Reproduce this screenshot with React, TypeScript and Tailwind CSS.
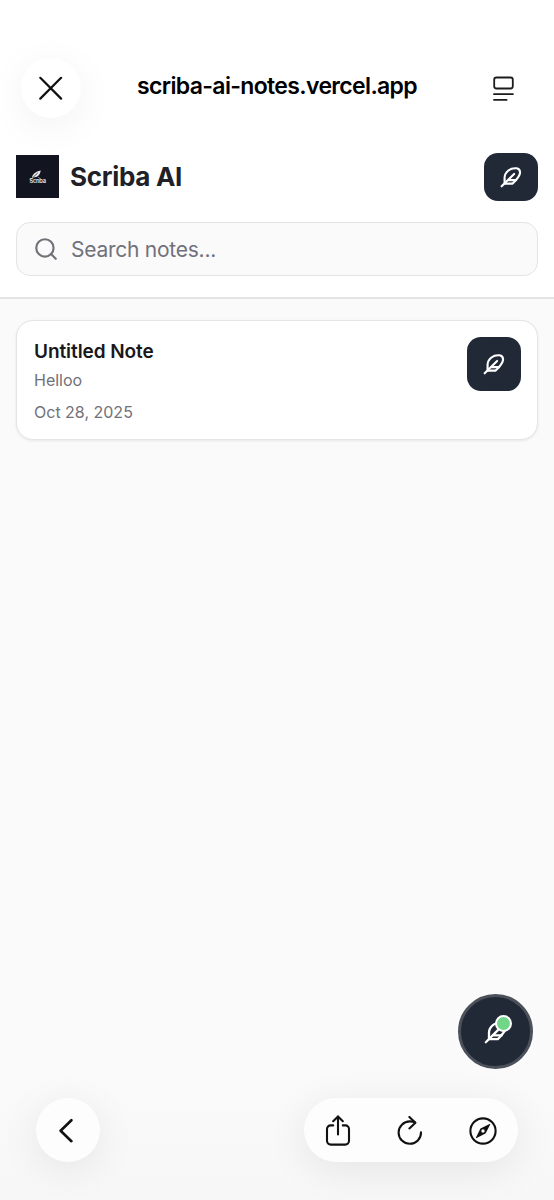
import type { FC, ReactNode } from 'react';
import { Search } from 'lucide-react';

type Note = {
    id: number;
    title: string;
    preview: string;
    date: string;
};

const notes: Note[] = [
    { id: 1, title: 'Untitled Note', preview: 'Helloo', date: 'Oct 28, 2025' },
];

const FeatherIcon: FC<{ size: number }> = ({ size }) => (
    <svg width={size} height={size} viewBox="0 0 24 24" fill="none" stroke="currentColor" strokeWidth="2.3" strokeLinecap="round" strokeLinejoin="round">
        <path d="M5 19.2V12.5C5 10 6.6 7 9.2 4.9 11.8 2.8 14.8 2.2 18 2.5 20.5 2.8 21.8 4.4 21.9 7 22 11 18 15 13.8 19.2Z" />
        <path d="M15.4 8.6 1.8 22.2M17.6 15.4H9" />
    </svg>
);

const CloseIcon: FC = () => (
    <svg width="24" height="24" viewBox="0 0 24 24" fill="none" stroke="#111" strokeWidth="2.2" strokeLinecap="round">
        <path d="M1.3 1.8 22.1 22.6M22.1 1.8 1.3 22.6" />
    </svg>
);

const PageMenuIcon: FC = () => (
    <svg width="22" height="26" viewBox="0 0 22 26" fill="none" stroke="#1c1c1e" strokeWidth="1.8" strokeLinecap="round">
        <rect x="1.2" y="1.5" width="18.6" height="11" rx="2.2" />
        <path d="M1 18.2h18.9M1 23.9h12.6" />
    </svg>
);

const BackIcon: FC = () => (
    <svg width="16" height="26" viewBox="0 0 16 26" fill="none" stroke="#111" strokeWidth="2.6" strokeLinecap="round" strokeLinejoin="round">
        <path d="M13.4 3.2 2.6 13.7 13.4 24.2" />
    </svg>
);

const ShareIcon: FC = () => (
    <svg width="26" height="32" viewBox="0 0 26 32" fill="none" stroke="#111" strokeWidth="2.1" strokeLinecap="round" strokeLinejoin="round">
        <path d="M8.2 10.4H5.6A3.6 3.6 0 0 0 2 14v11.8a3.8 3.8 0 0 0 3.8 3.8h14.4a3.8 3.8 0 0 0 3.8-3.8V14a3.6 3.6 0 0 0-3.6-3.6h-2.6" />
        <path d="M13 19.4V1.4M8.2 6.2 13 1.4l4.8 4.8" />
    </svg>
);

const ReloadIcon: FC = () => (
    <svg width="26" height="30" viewBox="0 0 26 30" fill="none" stroke="#111" strokeWidth="2.1" strokeLinecap="round" strokeLinejoin="round">
        <path d="M24 16.4A11.2 11.2 0 1 1 12.8 5.4Q16 5.4 18 6.4" />
        <path d="M12.4 1 18.4 6.7 12.4 12.4" />
    </svg>
);

const CompassIcon: FC = () => (
    <svg width="28" height="28" viewBox="0 0 28 28" fill="none">
        <circle cx="14" cy="14" r="12.6" stroke="#111" strokeWidth="2.1" />
        <path
            d="M20.6 7 12 11.2a1.6 1.6 0 0 0-.8.8L7 20.5c-.2.5.1.8.6.6L16 16.8a1.6 1.6 0 0 0 .8-.8L21.2 7.6c.2-.5-.1-.8-.6-.6ZM14 12.3a1.7 1.7 0 1 1 0 3.4 1.7 1.7 0 0 1 0-3.4Z"
            fill="#111"
            fillRule="evenodd"
        />
    </svg>
);

const Logo: FC = () => (
    <svg width="43" height="43" viewBox="0 0 43 43" className="mb-px shrink-0 bg-[#121520]">
        <path d="M15.9 23.2c.2-3.8 3.6-6.8 8.8-7.8-.4 3.8-2.6 6.4-6.1 6.9Z" fill="#e8e8ea" />
        <path d="m15.8 23.5 6-5.6" stroke="#121520" strokeWidth=".7" />
        <text x="21.7" y="28" textAnchor="middle" fill="#f4f4f5" fontSize="5.6" fontWeight="600" textLength="16.5" className="font-['Inter',sans-serif]">
            Scriba
        </text>
    </svg>
);

const BrowserBar: FC = () => (
    <header className="flex h-[153px] items-start pt-[58px] pr-[39px] pl-[21px]">
        <button
            type="button"
            aria-label="Close"
            className="flex size-[60px] items-center justify-center rounded-full bg-white shadow-[0_8px_40px_rgba(0,0,0,0.06)]"
        >
            <CloseIcon />
        </button>
        <span className="mt-[14px] ml-[56px] text-[23px] leading-[28px] font-semibold tracking-[-0.65px] text-black">
            scriba-ai-notes.vercel.app
        </span>
        <button type="button" aria-label="Page menu" className="mt-[18px] ml-auto">
            <PageMenuIcon />
        </button>
    </header>
);

const NoteButton: FC<{ className: string }> = ({ className }) => (
    <button
        type="button"
        aria-label="New note"
        className={`flex w-[54px] items-center justify-center rounded-[14px] bg-[#212936] text-white ${className}`}
    >
        <FeatherIcon size={22} />
    </button>
);

const NoteCard: FC<{ note: Note }> = ({ note }) => (
    <article className="flex h-[120px] items-start justify-between rounded-[17px] border-[1.5px] border-[#e4e4e9] bg-white pt-4 pr-4 pl-[17px] shadow-[0_1px_3px_rgba(0,0,0,0.08)]">
        <div>
            <h2 className="mt-px text-[19px] leading-[28px] font-semibold tracking-[-0.08px] text-[#18181b]">
                {note.title}
            </h2>
            <p className="mt-[2px] text-base leading-[24px] text-[#71717a]">{note.preview}</p>
            <p className="mt-[8px] text-base leading-[24px] text-[#71717a]">{note.date}</p>
        </div>
        <NoteButton className="h-[54px]" />
    </article>
);

const FloatingCircle: FC<{ className: string; children: ReactNode }> = ({ className, children }) => (
    <div
        className={`flex h-16 items-center rounded-full bg-[#fdfdfe] shadow-[0_8px_40px_rgba(0,0,0,0.08)] ${className}`}
    >
        {children}
    </div>
);

export default function App() {
    return (
        <div className="flex h-[1200px] w-[554px] flex-col overflow-hidden bg-[#fafafa] font-['Inter',sans-serif]">
            <div className="h-[299px] shrink-0 border-b-2 border-[#e4e4e7] bg-white">
                <BrowserBar />
                <div className="px-4">
                    <div className="flex h-[48px] items-center justify-between">
                        <div className="flex items-center gap-[11px]">
                            <Logo />
                            <h1 className="mb-px text-[26px] leading-[32px] font-bold tracking-[-0.3px] text-[#202126]">
                                Scriba AI
                            </h1>
                        </div>
                        <NoteButton className="h-[48px]" />
                    </div>
                    <div className="mt-[21px] flex h-[54px] items-center gap-3 rounded-[14px] border-[1.5px] border-[#e4e4e7] bg-[#fafafa] pl-4 text-[#71717a]">
                        <Search size={26} strokeWidth={2} />
                        <span className="mt-[2px] text-[21px] leading-[28px] tracking-[-0.25px]">
                            Search notes...
                        </span>
                    </div>
                </div>
            </div>

            <main className="flex-1 px-4 pt-[21px]">
                {notes.map((note) => (
                    <NoteCard key={note.id} note={note} />
                ))}
            </main>

            <div className="flex justify-end pr-[21px]">
                <button
                    type="button"
                    aria-label="Open assistant"
                    className="relative flex size-[75px] items-center justify-center rounded-full border-[3px] border-[#4b505a] bg-[#212936] text-white"
                >
                    <FeatherIcon size={24} />
                    <span className="absolute top-[18px] left-[34px] size-[17px] rounded-full border-[2.5px] border-white bg-[#6fd787]" />
                </button>
            </div>

            <footer className="flex h-[131px] shrink-0 items-start justify-between bg-linear-to-b from-[#fafafa] to-[#f7f7f7] pt-[29px] pr-9 pl-9">
                <FloatingCircle className="w-16 justify-center pr-1">
                    <BackIcon />
                </FloatingCircle>
                <FloatingCircle className="w-[214px] justify-between px-[21px] pt-px">
                    <ShareIcon />
                    <ReloadIcon />
                    <CompassIcon />
                </FloatingCircle>
            </footer>
        </div>
    );
}
